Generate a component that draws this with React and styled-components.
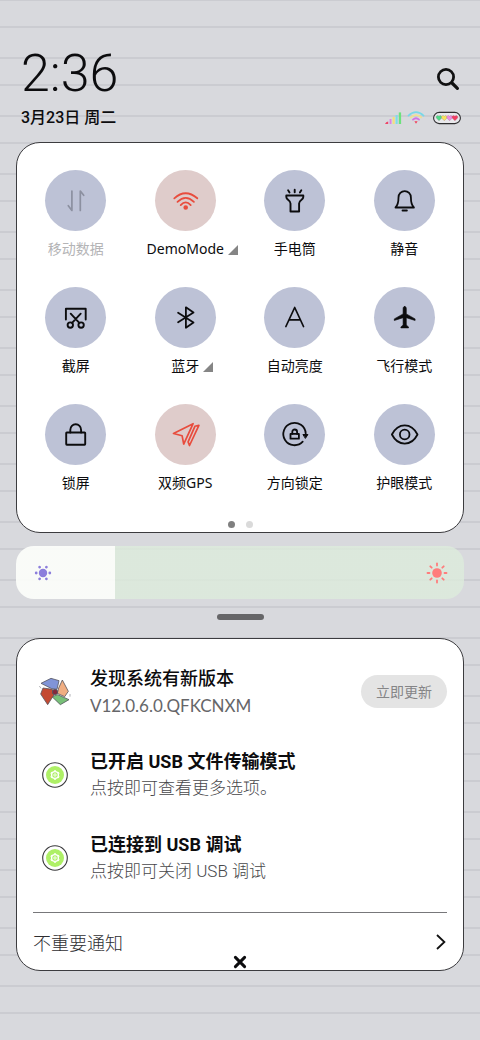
import React, { useState } from "react";
import styled, { createGlobalStyle } from "styled-components";

const GlobalStyle = createGlobalStyle`
  *, *::before, *::after { box-sizing: border-box; }
  body {
    margin: 0;
    color: #0c0c0e;
    font-family: "Noto Sans", "Noto Sans CJK SC", sans-serif;
    background: #d8d9dd repeating-linear-gradient(
      to bottom,
      #cbccd1 0 1px,
      #d8d9dd 1px 26px,
      #cbccd1 26px 28px,
      #d8d9dd 28px 57px,
      #cbccd1 57px 58px
    );
  }
  button {
    font: inherit;
    color: inherit;
    background: none;
    border: 0;
    padding: 0;
    cursor: pointer;
  }
  h2, p { margin: 0; }
  svg { display: block; }
`;

const Shade = styled.main`
  min-height: 100vh;
  padding: 44px 16px 68px;
  display: flex;
  flex-direction: column;
`;

const Header = styled.header`
  display: flex;
  flex-direction: column;
  gap: 4px;
  padding: 0 3px 0 5px;
  margin-bottom: 14px;
`;

const HeaderRow = styled.div`
  display: flex;
  align-items: center;
  justify-content: space-between;
`;

const Clock = styled.time`
  font-family: Roboto, sans-serif;
  font-weight: 300;
  font-size: 52px;
  line-height: 60px;
`;

const DateText = styled.time`
  font-family: Roboto, "Noto Sans CJK SC", sans-serif;
  font-weight: 500;
  font-size: 16px;
  line-height: 20px;
`;

const SearchButton = styled.button`
  margin-top: 10px;
`;

const StatusIcons = styled.div`
  display: flex;
  align-items: center;
  gap: 4px;
`;

const BatterySlot = styled.span`
  margin-left: 4px;
`;

const Panel = styled.section`
  position: relative;
  background: #fff;
  border: 1px solid #3c3c3f;
  border-radius: 24px;
`;

const TogglePanel = styled(Panel)`
  padding: 27px 4px 4px;
`;

const ToggleGrid = styled.div`
  display: grid;
  grid-template-columns: repeat(4, 1fr);
  row-gap: 28px;
`;

const Toggle = styled.button`
  display: flex;
  flex-direction: column;
  align-items: center;
  gap: 8px;
  font-size: 14px;
  line-height: 20px;
  color: ${(p) => (p.disabled ? "#b4b4b6" : "#0c0c0e")};
`;

const Disc = styled.span`
  display: grid;
  place-items: center;
  width: 61px;
  height: 61px;
  border-radius: 50%;
  color: ${(p) => (p.$active ? "#e84c3d" : p.$muted ? "#8c90a0" : "#0c0c0e")};
  background: ${(p) => (p.$active ? "#dfcccb" : "#bdc2d6")};
`;

const ToggleLabel = styled.span`
  position: relative;
  white-space: nowrap;
`;

const MoreMark = styled.svg`
  position: absolute;
  left: 100%;
  bottom: 4px;
  margin-left: 4px;
`;

const Pager = styled.div`
  display: flex;
  justify-content: center;
  gap: 11px;
  margin-top: 28px;
`;

const PagerDot = styled.button`
  width: 7px;
  height: 7px;
  border-radius: 50%;
  background: ${(p) => (p.$current ? "#808080" : "#dadada")};
`;

const Brightness = styled.label`
  position: relative;
  display: block;
  height: 53px;
  margin-top: 13px;
  border-radius: 18px;
  overflow: hidden;
`;

const BrightnessInput = styled.input`
  appearance: none;
  display: block;
  width: 100%;
  height: 100%;
  margin: 0;
  cursor: pointer;
  background: linear-gradient(
    to right,
    rgba(253, 255, 251, 0.9) var(--level),
    rgba(221, 236, 220, 0.8) var(--level)
  );
  &::-webkit-slider-thumb {
    appearance: none;
    width: 1px;
    height: 53px;
    background: transparent;
  }
`;

const BrightnessIcon = styled.svg`
  position: absolute;
  top: 15px;
  pointer-events: none;
  ${(p) => (p.$end ? "right: 15px;" : "left: 15px;")}
`;

const Handle = styled.button`
  align-self: center;
  width: 47px;
  height: 6px;
  margin: 15px 0 18px;
  border-radius: 3px;
  background: #666668;
`;

const NoticePanel = styled(Panel)`
  padding: 11px 16px 0;
`;

const NoticeList = styled.ul`
  list-style: none;
  margin: 0;
  padding: 0 0 13px;
  border-bottom: 1px solid #77777a;
`;

const Notice = styled.li`
  display: grid;
  grid-template-columns: 43px 1fr auto;
  column-gap: 14px;
  align-items: center;
  height: 83px;
`;

const NoticeIcon = styled.span`
  display: grid;
  place-items: center;
`;

const NoticeTitle = styled.h2`
  font-family: Roboto, "Noto Sans CJK SC", sans-serif;
  font-size: 18px;
  line-height: 27px;
  font-weight: ${(p) => (p.$strong ? 700 : 500)};
`;

const NoticeText = styled.p`
  font-family: ${(p) => (p.$plain ? "Lato" : "Roboto")}, "Noto Sans CJK SC", sans-serif;
  font-size: 17px;
  line-height: 27px;
  font-weight: ${(p) => (p.$plain ? 400 : 300)};
  color: ${(p) => (p.$plain ? "#666669" : "#48484b")};
`;

const UpdateButton = styled.button`
  height: 33px;
  padding: 0 15px;
  border-radius: 17px;
  font-size: 14px;
  line-height: 20px;
  color: #858587;
  background: #e4e4e4;
`;

const QuietRow = styled.button`
  display: flex;
  align-items: center;
  justify-content: space-between;
  width: 100%;
  height: 57px;
  font-size: 18px;
  font-weight: 300;
  color: #2e2e31;
`;

const ClearButton = styled.button`
  position: absolute;
  left: 50%;
  bottom: 1px;
  transform: translateX(-50%);
  color: #0c0c0e;
`;

const Glyph = ({ children, width = 2 }) => (
  <svg
    width="31"
    height="31"
    viewBox="-15.5 -15.5 31 31"
    fill="none"
    stroke="currentColor"
    strokeWidth={width}
    strokeLinecap="round"
    strokeLinejoin="round"
    aria-hidden="true"
  >
    {children}
  </svg>
);

const glyphs = {
  data: (
    <Glyph width={1.7}>
      <path d="M-3.6-9.5V10L-7.2 5.2M4.8 10V-9.5L8.2-5.2" />
    </Glyph>
  ),
  wifi: (
    <Glyph width={1.8}>
      <path d="M-11.2-2.2Q0-12.4 11.8-2.2M-8 1.4Q.2-6.6 8.4 1.4M-4.8 4.6Q.2-.8 5.2 4.6" />
      <circle cx=".2" cy="7" r="1.4" fill="currentColor" />
    </Glyph>
  ),
  torch: (
    <Glyph width={1.9}>
      <path d="M.2-10.8V-8.2M-6.4-10.2-5-8M6.8-10.2 5.4-8M-8.2-5H8.8V-3.4C8.8-.4 4.6-.4 4.6 3V11H-4V3C-4-.4-8.2-.4-8.2-3.4Z" />
    </Glyph>
  ),
  bell: (
    <Glyph width={1.8}>
      <path d="M-9 7C-6.6 4.6-6 2-6-3A6.2 6.4 0 0 1 6.4-3C6.4 2 7 4.6 9.4 7Z" />
      <path d="M-2 10H2.4" />
    </Glyph>
  ),
  scissors: (
    <Glyph width={1.9}>
      <path d="M-9.6 2V-8.8H10.2V2M-4.8-3.8 3.8 5.4M5.2-3.8-3.4 5.4" />
      <circle cx="-5.2" cy="7.6" r="2.7" />
      <circle cx="5.6" cy="7.6" r="2.7" />
    </Glyph>
  ),
  bluetooth: (
    <Glyph width={1.8}>
      <path d="M-7.4-4.8 8 5 .4 10.2V-10.2L8-5-7.4 4.8" />
    </Glyph>
  ),
  auto: (
    <Glyph width={1.7}>
      <path d="M-8.6 9 .2-10 9 9M-5.4 2.4H5.8" />
    </Glyph>
  ),
  plane: (
    <Glyph width={0.6}>
      <path
        fill="currentColor"
        d="M.2-11C1.4-11 1.8-10 1.8-9V-3.6L10.6 1.4V3L1.8 .2V7.6L4 9.4V10.4H-3.6V9.4L-1.4 7.6V.2L-10.2 3V1.4L-1.4-3.6V-9C-1.4-10-1-11 .2-11Z"
      />
    </Glyph>
  ),
  lock: (
    <Glyph width={1.9}>
      <rect x="-9.3" y="-2" width="19" height="12.2" rx=".6" />
      <path d="M-5.2-2V-4.6A5.4 5.6 0 0 1 5.6-4.6V-2" />
    </Glyph>
  ),
  gps: (
    <Glyph width={1.7}>
      <path d="M-12-1 7.6-10.8-1.8 9.6-3.4 1.2ZM2.6 7.4 9.4-8.2 13.4-9.2 4 11Z" />
    </Glyph>
  ),
  rotate: (
    <Glyph width={1.8}>
      <path d="M8.2 7.2A11.2 11.2 0 1 1 11.2-1" />
      <path strokeWidth="1" fill="currentColor" d="M8.8 0H13.4L11.1 3.6Z" />
      <rect x="-4" y="-.6" width="8.4" height="4.8" />
      <path d="M-2.2-.6V-2.6A2.4 2.4 0 0 1 2.6-2.6V-.6" />
    </Glyph>
  ),
  eye: (
    <Glyph width={1.8}>
      <path d="M-12.6 0C-6.4-12.2 6.8-12.2 13 0C6.8 12.2-6.4 12.2-12.6 0Z" />
      <circle cx=".2" cy="0" r="4.8" />
    </Glyph>
  ),
};

const toggles = [
  { label: "移动数据", glyph: "data", disabled: true },
  { label: "DemoMode", glyph: "wifi", active: true, more: true },
  { label: "手电筒", glyph: "torch" },
  { label: "静音", glyph: "bell" },
  { label: "截屏", glyph: "scissors" },
  { label: "蓝牙", glyph: "bluetooth", more: true },
  { label: "自动亮度", glyph: "auto" },
  { label: "飞行模式", glyph: "plane" },
  { label: "锁屏", glyph: "lock" },
  { label: "双频GPS", glyph: "gps", active: true },
  { label: "方向锁定", glyph: "rotate" },
  { label: "护眼模式", glyph: "eye" },
];

const SearchIcon = () => (
  <svg width="26" height="26" viewBox="0 0 26 26" fill="none" stroke="#111" strokeLinecap="round">
    <circle cx="11" cy="11" r="7.6" strokeWidth="2.8" />
    <path d="M17 17 22.4 22.4" strokeWidth="3.2" />
  </svg>
);

const SignalIcon = () => (
  <svg width="18" height="14" viewBox="0 0 18 14" aria-hidden="true">
    <path d="M0 13 1.2 11.2 3.2 10.6V13Z" fill="#ee4466" />
    <rect x="4.6" y="8" width="1.9" height="5" fill="#dd82e8" />
    <rect x="7.6" y="6" width="2.1" height="7" fill="#f4e07a" />
    <rect x="10.6" y="4" width="2.1" height="9" fill="#7fdcea" />
    <rect x="13.8" y="1.4" width="2.3" height="11.6" fill="#6ce27c" />
  </svg>
);

const WifiStatusIcon = () => (
  <svg width="18" height="14" viewBox="0 0 18 14" fill="none" strokeLinecap="round" aria-hidden="true">
    <path d="M1.4 4.6Q9-2.4 16.6 4.6" stroke="#78d8e8" strokeWidth="1.6" />
    <path d="M3.8 6.4Q9 1.6 14.2 6.4" stroke="#f2e28a" strokeWidth="1.5" />
    <path d="M6 8.6Q9 6 12 8.6" stroke="#d070e6" strokeWidth="1.8" />
    <path d="M7.4 10.2H10.6L9 12.8Z" fill="#f0405c" />
  </svg>
);

const heart = "M0 2.8-2.7 0A1.5 1.5 0 0 1 0-1.7 1.5 1.5 0 0 1 2.7 0Z";

const BatteryIcon = () => (
  <svg width="28" height="14" viewBox="0 0 28 14" aria-hidden="true">
    <rect x=".6" y="1.4" width="26.8" height="11.2" rx="5.6" fill="#e9e9ec" stroke="#2e2e30" strokeWidth="1.1" />
    {["#4fdc88", "#f7e45c", "#ee8ce0", "#f43e62"].map((fill, i) => (
      <path key={fill} d={heart} fill={fill} stroke="#8a6a80" strokeWidth=".3" transform={`translate(${6 + i * 5.3} 7)`} />
    ))}
  </svg>
);

const PinwheelIcon = () => (
  <svg width="36" height="32" viewBox="80 72 108 96" stroke="#55565e" strokeWidth="2.4" strokeLinejoin="round" aria-hidden="true">
    <path d="M92 94 122 79 146 86 140 112 124 110Z" fill="#8094d8" />
    <path d="M156 84 174 118 163 134 141 124 145 108Z" fill="#f0ae82" />
    <path d="M125 134 142 128 176 143 150 158Z" fill="#78c078" />
    <path d="M98 108 126 112 130 130 112 158 91 126Z" fill="#c44a32" />
    <circle cx="134" cy="120" r="8" fill="#84283c" />
    <path d="M87 102 92 109M179 126V134" stroke="#a0a0a4" fill="none" />
  </svg>
);

const gearTeeth = [0, 60, 120, 180, 240, 300];

const GearIcon = () => (
  <svg width="26" height="26" viewBox="-13 -13 26 26" fill="none" aria-hidden="true">
    <circle r="12.3" fill="#fff" stroke="#39393b" strokeWidth="1.1" />
    <circle r="9" fill="#aef066" />
    <circle r="3.4" stroke="#fff" strokeWidth="1.4" />
    {gearTeeth.map((angle) => (
      <path key={angle} d="M0-3.8V-4.8" stroke="#fff" strokeWidth="2" transform={`rotate(${angle})`} />
    ))}
    <circle r="1.2" stroke="#fff" strokeWidth=".9" />
  </svg>
);

const notices = [
  { title: "发现系统有新版本", text: "V12.0.6.0.QFKCNXM", icon: <PinwheelIcon />, action: "立即更新" },
  { title: "已开启 USB 文件传输模式", text: "点按即可查看更多选项。", icon: <GearIcon />, strong: true },
  { title: "已连接到 USB 调试", text: "点按即可关闭 USB 调试", icon: <GearIcon />, strong: true },
];

const rayAngles = [0, 45, 90, 135, 180, 225, 270, 315];
const dotAngles = [30, 90, 150, 210, 270, 330];

export default function App() {
  const [level, setLevel] = useState(22);

  return (
    <Shade>
      <GlobalStyle />
      <Header>
        <HeaderRow>
          <Clock>2:36</Clock>
          <SearchButton aria-label="搜索">
            <SearchIcon />
          </SearchButton>
        </HeaderRow>
        <HeaderRow>
          <DateText>3月23日 周二</DateText>
          <StatusIcons>
            <SignalIcon />
            <WifiStatusIcon />
            <BatterySlot>
              <BatteryIcon />
            </BatterySlot>
          </StatusIcons>
        </HeaderRow>
      </Header>

      <TogglePanel>
        <ToggleGrid>
          {toggles.map((t) => (
            <Toggle key={t.label} disabled={t.disabled}>
              <Disc $active={t.active} $muted={t.disabled}>
                {glyphs[t.glyph]}
              </Disc>
              <ToggleLabel>
                {t.label}
                {t.more && (
                  <MoreMark width="10" height="10" viewBox="0 0 10 10" aria-hidden="true">
                    <path d="M10 0V10H0Z" fill="#858585" />
                  </MoreMark>
                )}
              </ToggleLabel>
            </Toggle>
          ))}
        </ToggleGrid>
        <Pager>
          <PagerDot $current aria-label="1" />
          <PagerDot aria-label="2" />
        </Pager>
      </TogglePanel>

      <Brightness>
        <BrightnessInput
          type="range"
          min="0"
          max="100"
          value={level}
          aria-label="亮度"
          onChange={(e) => setLevel(Number(e.target.value))}
          style={{ "--level": `${level}%` }}
        />
        <BrightnessIcon width="24" height="24" viewBox="-12 -12 24 24" fill="#8c7edc" aria-hidden="true">
          <circle r="4.2" />
          {dotAngles.map((angle) => (
            <circle key={angle} cy="-6.8" r="1.4" transform={`rotate(${angle})`} />
          ))}
        </BrightnessIcon>
        <BrightnessIcon $end width="24" height="24" viewBox="-12 -12 24 24" fill="#ff7c7c" aria-hidden="true">
          <circle r="4.8" />
          {rayAngles.map((angle) => (
            <rect key={angle} x="-.9" y="-10.4" width="1.8" height="3.8" rx=".9" transform={`rotate(${angle})`} />
          ))}
        </BrightnessIcon>
      </Brightness>

      <Handle aria-label="收起" />

      <NoticePanel>
        <NoticeList>
          {notices.map((n) => (
            <Notice key={n.title}>
              <NoticeIcon>{n.icon}</NoticeIcon>
              <div>
                <NoticeTitle $strong={n.strong}>{n.title}</NoticeTitle>
                <NoticeText $plain={!n.strong}>{n.text}</NoticeText>
              </div>
              {n.action && <UpdateButton>{n.action}</UpdateButton>}
            </Notice>
          ))}
        </NoticeList>
        <QuietRow>
          不重要通知
          <svg width="12" height="18" viewBox="0 0 12 18" fill="none" stroke="#111" strokeWidth="1.8" aria-hidden="true">
            <path d="M2 2 9.4 9 2 16" />
          </svg>
        </QuietRow>
        <ClearButton aria-label="清除">
          <svg width="14" height="14" viewBox="0 0 14 14" stroke="currentColor" strokeWidth="3" strokeLinecap="round">
            <path d="M2.4 2.4 11.6 11.6M11.6 2.4 2.4 11.6" />
          </svg>
        </ClearButton>
      </NoticePanel>
    </Shade>
  );
}
